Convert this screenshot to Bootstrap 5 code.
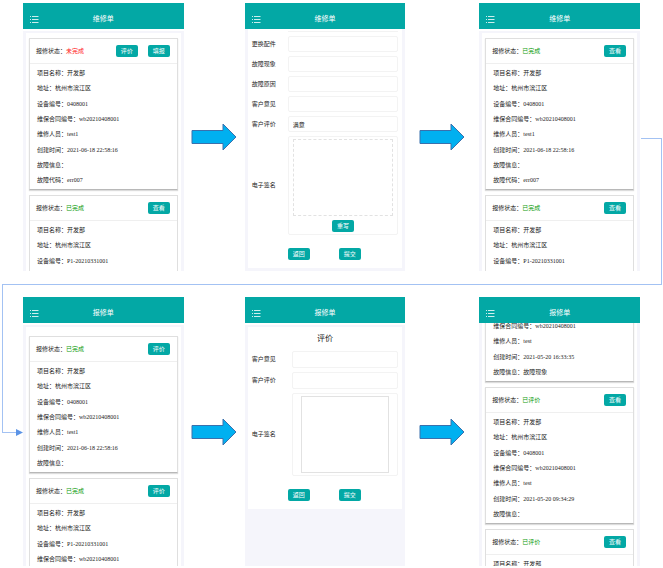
<!DOCTYPE html>
<html lang="zh-CN">
<head>
<meta charset="utf-8">
<meta name="viewport" content="width=device-width, initial-scale=1">
<title>维修单流程</title>
<link href="https://cdn.jsdelivr.net/npm/bootstrap@5.3.0/dist/css/bootstrap.min.css" rel="stylesheet">
<style>
  :root { --teal: #03a8a5; --haze: #f5f5fb; --link: #a3c2f3; }
  body { font: 6px/15px "Liberation Serif", "Noto Sans CJK SC", serif; color: #222; background: #fff; }
  .flow-row { display: grid; grid-template-columns: 21px minmax(0,1fr) 61px minmax(0,1fr) 74px minmax(0,1fr) 22px; margin: 0 1px 0 2px; }
  .flow-first { padding-top: 3px; border-bottom: 1px solid var(--link); }
  .flow-first .phone { margin-bottom: 13px; }
  .flow-first .arrow { margin-bottom: 13px; }
  .flow-second { grid-template-rows: minmax(0,1fr); padding-bottom: 2px; }
  .flow-second .phone, .flow-second .arrow { margin-top: 12px; }
  .link-out { height: calc(50% + 6px); margin-left: 1px; border: 1px solid var(--link); border-width: 1px 1px 0 0; }
  .link-in { height: calc(50% + 7px); margin-right: 5px; border: 1px solid var(--link); border-width: 0 0 1px 1px; }
  .link-in svg { position: absolute; right: -5px; bottom: -4px; }
  .phone-head { height: 26px; flex: none; display: grid; grid-template-columns: 20px 1fr 20px; padding-top: 7px; background: var(--teal); color: #fff; font-size: 7px; }
  .phone-head h2 { font-size: 7px; line-height: 19px; font-weight: 400; margin: 0; text-align: center; }
  .menu-btn { border: 0; background: none; padding: 0 0 0 7px; line-height: 1; color: #fff; text-align: left; }
  .menu-btn svg { display: block; }
  .phone-body { border: solid var(--haze); border-width: 2px 3px 0; margin-top: 2px; padding: 5px 3px 0; }
  .flow-second .phone-body { padding-top: 9px; }
  .phone .scrolled-body { border-top: 0; margin-top: 0; padding-top: 0; }
  .ticket { border: 1px solid #dfdfdf; border-bottom-color: #b8b8b8; box-shadow: 0 1px 1px #dcdcdc; margin-bottom: 5px; }
  .ticket-head { height: 25px; padding: 0 7px 0 6px; border-bottom: 1px solid #efefef; }
  .ticket-acts { gap: 10px; }
  .ticket-rows { list-style: none; margin: 0; padding: 2px 7px 1px; }
  .ticket-rows li:nth-child(3n) { padding-top: 1px; }
  .ticket-cut { border-bottom: 0; box-shadow: none; margin-bottom: 0; }
  .ticket-cut .ticket-rows { padding-bottom: 2px; }
  .ticket-tail { border-top: 0; margin-top: -4px; }
  .ticket-tail .ticket-rows { padding-top: 0; }
  .wait { color: #ff1a1a; } .done { color: #0a9a0a; }
  .act { width: 22px; height: 12px; padding: 0; border: 0; border-radius: 2px; background: var(--teal); color: #fff; font-size: 6px; line-height: 12px; }
  .act:hover { background: #02908d; color: #fff; }
  .form-body { border: solid var(--haze); border-width: 0 3px 3px; padding: 0 4px 8px; }
  .rate-body { border-width: 2px 3px 0; margin-top: 2px; background: #fff; }
  .pair { display: grid; grid-template-columns: 36px minmax(0,1fr); align-items: center; margin-bottom: 4px; }
  .rate-body .pair { grid-template-columns: 40px minmax(0,1fr); }
  .field { height: 16px; padding: 0 4px; border: 1px solid #f3f3f3; border-radius: 2px; font-size: 6px; line-height: 14px; min-height: 0; color: #111; }
  .rate-body .field { height: 17px; }
  .field-end { height: 3px; margin: 0 0 4px 36px; border-bottom: 1px solid #f3f3f3; }
  .sign { border: 1px solid #f3f3f3; border-radius: 2px; padding: 2px 4px; }
  .rate-body .sign { padding: 2px 8px; }
  .sign-pad { display: block; width: 100%; height: 77px; }
  .pad-dashed { border: 1px dashed #e2e2e2; margin-bottom: 4px; }
  .pad-solid { border: 1px solid #e2e2e2; }
  .form-acts { margin: 13px 0 0 36px; gap: 29px; }
  .rate-title { font-size: 8px; line-height: 24px; font-weight: 400; margin: 0; text-align: center; }
  .phone-blank { background: var(--haze); }
</style>
</head>
<body class="vh-100 d-flex flex-column overflow-hidden">

<svg class="d-none" aria-hidden="true">
  <symbol id="menu" viewBox="0 0 9 7"><path d="M0 .5h1M0 3.5h1M0 6.5h1M2 .5h6.500M2 3.5h6.500M2 6.5h6.500" stroke="#fff" stroke-opacity=".8" fill="none"/></symbol>
  <symbol id="arrow" viewBox="0 0 46 28"><path d="M1 7.5H32V1L45 14 32 27V20.5H1Z" fill="#00b0f0" stroke="#3a70ac"/></symbol>
</svg>

<main class="d-flex flex-column flex-grow-1 overflow-hidden">
<section class="flow-row flow-first">
  <div></div>
  <article class="phone">
    <header class="phone-head"><button class="menu-btn" aria-label="菜单"><svg width="9" height="7"><use href="#menu"/></svg></button><h2>维修单</h2></header>
    <div class="phone-body">
      <div class="ticket">
        <div class="ticket-head d-flex align-items-center"><span>报修状态：<span class="wait">未完成</span></span><div class="ticket-acts d-flex ms-auto"><button class="btn act">评价</button><button class="btn act">填报</button></div></div>
        <ul class="ticket-rows"><li>项目名称：开发部</li><li>地址：杭州市滨江区</li><li>设备编号：0408001</li><li>维保合同编号：wb20210408001</li><li>维修人员：test1</li><li>创建时间：2021-06-18 22:58:16</li><li>故障信息：</li><li>故障代码：err007</li></ul>
      </div>
      <div class="ticket ticket-cut">
        <div class="ticket-head d-flex align-items-center"><span>报修状态：<span class="done">已完成</span></span><button class="btn act ms-auto">查看</button></div>
        <ul class="ticket-rows"><li>项目名称：开发部</li><li>地址：杭州市滨江区</li><li>设备编号：P1-20210331001</li></ul>
      </div>
    </div>
  </article>
  <svg class="arrow align-self-center mx-auto" width="46" height="28" aria-hidden="true"><use href="#arrow"/></svg>
  <article class="phone">
    <header class="phone-head"><button class="menu-btn" aria-label="菜单"><svg width="9" height="7"><use href="#menu"/></svg></button><h2>维修单</h2></header>
    <form class="form-body">
      <div class="field-end"></div>
      <div class="pair"><label for="parts">更换配件</label><input id="parts" class="form-control field"></div>
      <div class="pair"><label for="symptom">故障现象</label><input id="symptom" class="form-control field"></div>
      <div class="pair"><label for="cause">故障原因</label><input id="cause" class="form-control field"></div>
      <div class="pair"><label for="opinion">客户意见</label><input id="opinion" class="form-control field"></div>
      <div class="pair"><label for="rating">客户评价</label><input id="rating" class="form-control field" value="满意"></div>
      <div class="pair mb-0"><span>电子签名</span><div class="sign text-center"><canvas class="sign-pad pad-dashed" aria-label="电子签名"></canvas><button type="button" class="btn act d-block mx-auto">重写</button></div></div>
      <div class="form-acts d-flex"><button type="button" class="btn act">返回</button><button type="button" class="btn act">提交</button></div>
    </form>
  </article>
  <svg class="arrow align-self-center mx-auto" width="46" height="28" aria-hidden="true"><use href="#arrow"/></svg>
  <article class="phone">
    <header class="phone-head"><button class="menu-btn" aria-label="菜单"><svg width="9" height="7"><use href="#menu"/></svg></button><h2>维修单</h2></header>
    <div class="phone-body">
      <div class="ticket">
        <div class="ticket-head d-flex align-items-center"><span>报修状态：<span class="done">已完成</span></span><button class="btn act ms-auto">查看</button></div>
        <ul class="ticket-rows"><li>项目名称：开发部</li><li>地址：杭州市滨江区</li><li>设备编号：0408001</li><li>维保合同编号：wb20210408001</li><li>维修人员：test1</li><li>创建时间：2021-06-18 22:58:16</li><li>故障信息：</li><li>故障代码：err007</li></ul>
      </div>
      <div class="ticket ticket-cut">
        <div class="ticket-head d-flex align-items-center"><span>报修状态：<span class="done">已完成</span></span><button class="btn act ms-auto">查看</button></div>
        <ul class="ticket-rows"><li>项目名称：开发部</li><li>地址：杭州市滨江区</li><li>设备编号：P1-20210331001</li></ul>
      </div>
    </div>
  </article>
  <div class="link-out align-self-end"></div>
</section>

<section class="flow-row flow-second flex-grow-1 overflow-hidden">
  <div class="link-in position-relative"><svg width="7" height="7" aria-hidden="true"><path d="M0 0 7 3.5 0 7Z" fill="#5b93e6"/></svg></div>
  <article class="phone overflow-hidden">
    <header class="phone-head"><button class="menu-btn" aria-label="菜单"><svg width="9" height="7"><use href="#menu"/></svg></button><h2>报修单</h2></header>
    <div class="phone-body">
      <div class="ticket">
        <div class="ticket-head d-flex align-items-center"><span>报修状态：<span class="done">已完成</span></span><button class="btn act ms-auto">评价</button></div>
        <ul class="ticket-rows"><li>项目名称：开发部</li><li>地址：杭州市滨江区</li><li>设备编号：0408001</li><li>维保合同编号：wb20210408001</li><li>维修人员：test1</li><li>创建时间：2021-06-18 22:58:16</li><li>故障信息：</li></ul>
      </div>
      <div class="ticket ticket-cut">
        <div class="ticket-head d-flex align-items-center"><span>报修状态：<span class="done">已完成</span></span><button class="btn act ms-auto">评价</button></div>
        <ul class="ticket-rows"><li>项目名称：开发部</li><li>地址：杭州市滨江区</li><li>设备编号：P1-20210331001</li><li>维保合同编号：wb20210408001</li></ul>
      </div>
    </div>
  </article>
  <svg class="arrow align-self-center mx-auto" width="46" height="28" aria-hidden="true"><use href="#arrow"/></svg>
  <article class="phone d-flex flex-column overflow-hidden">
    <header class="phone-head"><button class="menu-btn" aria-label="菜单"><svg width="9" height="7"><use href="#menu"/></svg></button><h2>报修单</h2></header>
    <form class="form-body rate-body">
      <h3 class="rate-title">评价</h3>
      <div class="pair"><label for="opinion2">客户意见</label><input id="opinion2" class="form-control field"></div>
      <div class="pair"><label for="rating2">客户评价</label><input id="rating2" class="form-control field"></div>
      <div class="pair mb-0"><span>电子签名</span><div class="sign"><canvas class="sign-pad pad-solid" aria-label="电子签名"></canvas></div></div>
      <div class="form-acts d-flex"><button type="button" class="btn act">返回</button><button type="button" class="btn act">提交</button></div>
    </form>
    <div class="phone-blank flex-grow-1"></div>
  </article>
  <svg class="arrow align-self-center mx-auto" width="46" height="28" aria-hidden="true"><use href="#arrow"/></svg>
  <article class="phone d-flex flex-column overflow-hidden">
    <header class="phone-head"><button class="menu-btn" aria-label="菜单"><svg width="9" height="7"><use href="#menu"/></svg></button><h2>报修单</h2></header>
    <div class="phone-body scrolled-body overflow-hidden">
      <div class="ticket ticket-tail">
        <ul class="ticket-rows"><li>维保合同编号：wb20210408001</li><li>维修人员：test</li><li>创建时间：2021-05-20 16:33:35</li><li>故障信息：故障现象</li></ul>
      </div>
      <div class="ticket">
        <div class="ticket-head d-flex align-items-center"><span>报修状态：<span class="done">已评价</span></span><button class="btn act ms-auto">查看</button></div>
        <ul class="ticket-rows"><li>项目名称：开发部</li><li>地址：杭州市滨江区</li><li>设备编号：0408001</li><li>维保合同编号：wb20210408001</li><li>维修人员：test</li><li>创建时间：2021-05-20 09:34:29</li><li>故障信息：</li></ul>
      </div>
      <div class="ticket ticket-cut">
        <div class="ticket-head d-flex align-items-center"><span>报修状态：<span class="done">已评价</span></span><button class="btn act ms-auto">查看</button></div>
        <ul class="ticket-rows"><li>项目名称：开发部</li></ul>
      </div>
    </div>
  </article>
  <div></div>
</section>
</main>
<script src="https://cdn.jsdelivr.net/npm/bootstrap@5.3.0/dist/js/bootstrap.bundle.min.js"></script>
</body>
</html>
